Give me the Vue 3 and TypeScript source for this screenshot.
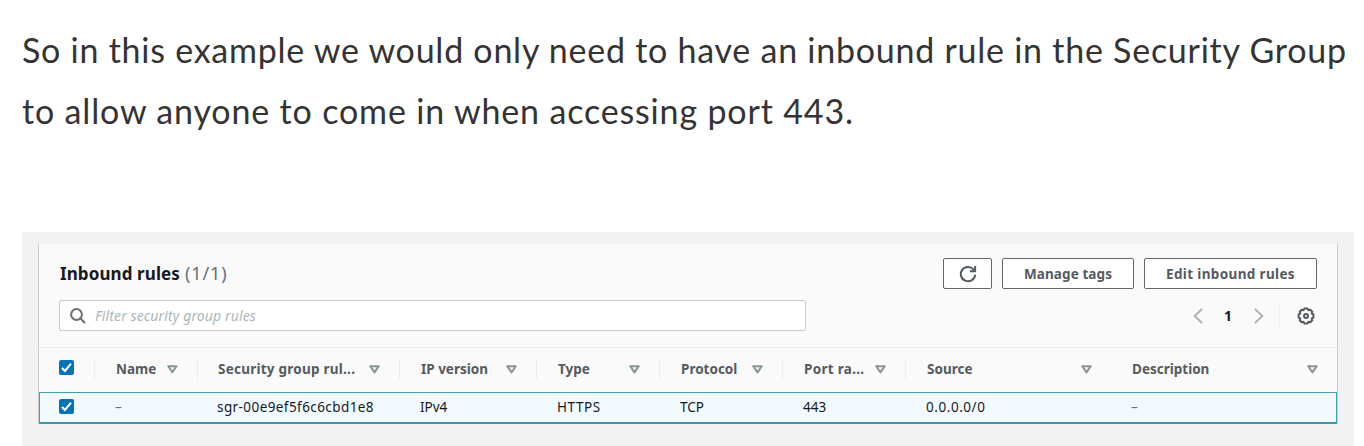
<script setup lang="ts">
interface Column {
  key: string
  label: string
  value: string
  muted?: boolean
}

const columns: Column[] = [
  { key: 'col-name', label: 'Name', value: '–', muted: true },
  { key: 'col-rule', label: 'Security group rul...', value: 'sgr-00e9ef5f6c6cbd1e8' },
  { key: 'col-ip', label: 'IP version', value: 'IPv4' },
  { key: 'col-type', label: 'Type', value: 'HTTPS' },
  { key: 'col-protocol', label: 'Protocol', value: 'TCP' },
  { key: 'col-port', label: 'Port ra...', value: '443' },
  { key: 'col-source', label: 'Source', value: '0.0.0.0/0' },
  { key: 'col-description', label: 'Description', value: '–', muted: true },
]
</script>

<template>
  <main class="article">
    <p class="prose">
      <span class="line first">So in this example we would only need to have an inbound rule in the Security Group</span>
      <span class="line second">to allow anyone to come in when accessing port 443.</span>
    </p>

    <section class="figure">
      <div class="panel">
        <header class="top">
          <h2 class="title"><span class="name">Inbound rules</span> <span class="count">(1/1)</span></h2>
          <div class="actions">
            <button class="btn refresh" aria-label="Refresh">
              <svg width="18" height="18" viewBox="0 0 18 18" fill="none" stroke="#545b5f" stroke-width="2">
                <path d="M16.2 9.6A7.2 7.2 0 1 1 14.4 4.3L16 6" />
                <path d="M16.1 1V6.3H10.8" />
              </svg>
            </button>
            <button class="btn manage"><span>Manage tags</span></button>
            <button class="btn edit"><span>Edit inbound rules</span></button>
          </div>
        </header>

        <div class="tools">
          <div class="search">
            <svg width="16" height="16" viewBox="0 0 16 16" fill="none" stroke="#687078" stroke-width="2">
              <circle cx="6.5" cy="6.5" r="5.4" />
              <path d="M10.3 10.3L15 15" />
            </svg>
            <span class="placeholder">Filter security group rules</span>
          </div>
          <div class="pager">
            <svg width="10" height="16" viewBox="0 0 10 16" fill="none" stroke="#aab0b3" stroke-width="1.8">
              <path d="M9 1L1.6 8L9 15" />
            </svg>
            <span class="page">1</span>
            <svg width="10" height="16" viewBox="0 0 10 16" fill="none" stroke="#aab0b3" stroke-width="1.8">
              <path d="M1 1L8.4 8L1 15" />
            </svg>
            <span class="divider"></span>
            <svg class="gear" width="18" height="18" viewBox="0 0 18 18" fill="none" stroke="#545b5f" stroke-width="2" stroke-linejoin="round">
              <path d="M7.4 1.6H10.6L11.5 3.3L13.3 2.7L15.3 4.7L14.7 6.5L16.4 7.4V10.6L14.7 11.5L15.3 13.3L13.3 15.3L11.5 14.7L10.6 16.4H7.4L6.5 14.7L4.7 15.3L2.7 13.3L3.3 11.5L1.6 10.6V7.4L3.3 6.5L2.7 4.7L4.7 2.7L6.5 3.3Z" />
              <circle cx="9" cy="9" r="2" />
            </svg>
          </div>
        </div>

        <div class="row head">
          <div class="check">
            <span class="box">
              <svg width="15" height="15" viewBox="0 0 14 14" fill="none" stroke="#fff" stroke-width="2"><path d="M2.7 7.4L5.6 10.1L11.2 3.4" /></svg>
            </span>
          </div>
          <div v-for="c in columns" :key="c.key" class="cell" :class="c.key">
            <span class="text">{{ c.label }}</span>
            <svg width="11" height="9" viewBox="0 0 11 9" fill="none" stroke="#879596" stroke-width="2" stroke-linejoin="round">
              <path d="M1.3 1.2H9.7L5.5 7.4Z" />
            </svg>
          </div>
        </div>

        <div class="row body">
          <div class="check">
            <span class="box">
              <svg width="15" height="15" viewBox="0 0 14 14" fill="none" stroke="#fff" stroke-width="2"><path d="M2.7 7.4L5.6 10.1L11.2 3.4" /></svg>
            </span>
          </div>
          <div v-for="c in columns" :key="c.key" class="cell" :class="[c.key, { muted: c.muted }]">
            <span class="text">{{ c.value }}</span>
          </div>
        </div>
      </div>
    </section>
  </main>
</template>

<style>
body {
  background: #fff;
}
</style>

<style scoped>
* {
  box-sizing: border-box;
}
.article {
  width: 1364px;
  height: 446px;
  overflow: hidden;
  background: #fff;
  font-family: 'Noto Sans', sans-serif;
}
.prose {
  margin: 0;
  height: 232px;
  padding: 19px 0 0 22px;
  font-family: Lato, sans-serif;
  font-size: 34px;
  line-height: 61px;
  color: #343434;
}
.line {
  display: block;
  white-space: nowrap;
}
.first {
  letter-spacing: 0.75px;
}
.second {
  letter-spacing: 0.84px;
}
.figure {
  width: 1332px;
  height: 214px;
  margin-left: 22px;
  padding: 12px 16px 0;
  background: #f1f2f2;
}
.panel {
  width: 1300px;
  height: 180px;
  border: solid #c9cdcd;
  border-width: 0 1px;
  background: #fafafa;
}
.top {
  display: flex;
  justify-content: space-between;
  height: 56px;
  padding: 14px 20px 0;
}
.title {
  display: flex;
  margin: 0;
  font-size: 17px;
  line-height: 31px;
  font-weight: 700;
  letter-spacing: 0.1px;
  color: #16191f;
  white-space: nowrap;
}
.name {
  width: 126px;
  padding-left: 1px;
}
.count {
  font-size: 18px;
  font-weight: 400;
  letter-spacing: 0.9px;
  color: #687078;
}
.actions {
  display: flex;
  gap: 10px;
}
.btn {
  display: flex;
  align-items: center;
  justify-content: center;
  height: 31px;
  padding: 0;
  border: 1px solid #62686e;
  border-radius: 2px;
  background: #fff;
  color: #545b5f;
  font: 700 13.5px 'Noto Sans', sans-serif;
  white-space: nowrap;
}
.refresh {
  width: 49px;
}
.manage {
  width: 132px;
  letter-spacing: 0.1px;
}
.edit {
  width: 173px;
  letter-spacing: 0.35px;
}
.tools {
  display: flex;
  justify-content: space-between;
  height: 47px;
  padding: 0 20px;
}
.search {
  display: flex;
  align-items: center;
  gap: 9px;
  width: 747px;
  height: 31px;
  padding-left: 10px;
  border: 1px solid #c6cbcb;
  border-radius: 2px;
  background: #fff;
}
.placeholder {
  font-size: 14px;
  font-style: italic;
  letter-spacing: 0.12px;
  color: #aab7b8;
  white-space: nowrap;
}
.pager {
  display: flex;
  align-items: center;
  height: 31px;
}
.page {
  width: 51px;
  padding-right: 1px;
  text-align: center;
  font-size: 14px;
  font-weight: 700;
  color: #16191f;
}
.divider {
  width: 1px;
  height: 27px;
  margin: 0 17px 0 15px;
  background: #f0f2f2;
}
.gear {
  margin-right: 2px;
}
.row {
  display: grid;
  grid-template-columns: 55px 103px 202px 137px 123px 123px 123px 206px 1fr;
  align-items: center;
}
.head {
  height: 45px;
  border-top: 1px solid #eaeded;
}
.check {
  padding-left: 20px;
}
.box {
  display: block;
  width: 15px;
  height: 15px;
  border-radius: 2px;
  background: #0073bb;
}
.box svg {
  display: block;
}
.head .check {
  padding-bottom: 5px;
}
.cell {
  display: flex;
  align-items: center;
  height: 20px;
  white-space: nowrap;
}
.head .cell {
  justify-content: space-between;
  padding: 0 19px 2px 21px;
  border-left: 1px solid #eceeee;
  font-size: 13.5px;
  font-weight: 700;
  color: #545b5f;
}
.head .col-name {
  justify-content: flex-start;
  gap: 11px;
}
.head .col-rule {
  padding-left: 20px;
}
.head .col-description {
  padding-left: 20px;
  border-left-color: #fafafa;
}
.head .col-rule .text {
  letter-spacing: 0.24px;
}
.head .col-port .text {
  letter-spacing: 0.3px;
}
.body {
  height: 32px;
  border: 1px solid #3ba3b5;
  border-bottom: 2px solid #3b99aa;
  background: #f1faff;
}
.body .check {
  padding-left: 19px;
  padding-bottom: 2px;
}
.body .cell {
  padding: 0 0 2px 20px;
  font-size: 13.5px;
  color: #16191f;
}
.body .col-rule,
.body .col-description {
  padding-left: 19px;
}
.body .col-rule {
  letter-spacing: 0.42px;
}
.body .col-type,
.body .col-source {
  letter-spacing: 0.55px;
}
.body .muted {
  color: #687078;
}
</style>
